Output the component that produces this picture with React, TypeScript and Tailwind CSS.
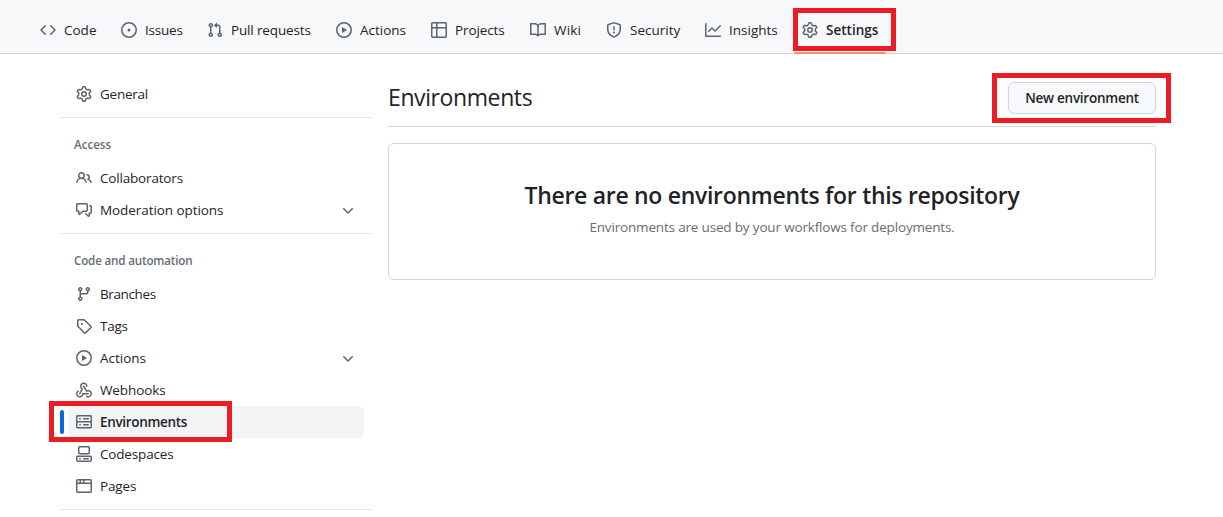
import type { ReactNode } from "react";

const PATHS = {
  code: "m11.28 3.22 4.25 4.25a.75.75 0 0 1 0 1.06l-4.25 4.25a.749.749 0 0 1-1.275-.326.749.749 0 0 1 .215-.734L13.94 8l-3.72-3.72a.749.749 0 0 1 .326-1.275.749.749 0 0 1 .734.215Zm-6.56 0a.751.751 0 0 1 1.042.018.751.751 0 0 1 .018 1.042L2.06 8l3.72 3.72a.749.749 0 0 1-.326 1.275.749.749 0 0 1-.734-.215L.47 8.53a.75.75 0 0 1 0-1.06Z",
  issue: "M8 9.5a1.5 1.5 0 1 0 0-3 1.5 1.5 0 0 0 0 3Z M8 0a8 8 0 1 1 0 16A8 8 0 0 1 8 0ZM1.5 8a6.5 6.5 0 1 0 13 0 6.5 6.5 0 0 0-13 0Z",
  pull: "M1.5 3.25a2.25 2.25 0 1 1 3 2.122v5.256a2.251 2.251 0 1 1-1.5 0V5.372A2.25 2.25 0 0 1 1.5 3.25Zm5.677-.177L9.573.677A.25.25 0 0 1 10 .854V2.5h1A2.5 2.5 0 0 1 13.5 5v5.628a2.251 2.251 0 1 1-1.5 0V5a1 1 0 0 0-1-1h-1v1.646a.25.25 0 0 1-.427.177L7.177 3.427a.25.25 0 0 1 0-.354ZM3.75 2.5a.75.75 0 1 0 0 1.5.75.75 0 0 0 0-1.5Zm0 9.5a.75.75 0 1 0 0 1.5.75.75 0 0 0 0-1.5Zm8.25.75a.75.75 0 1 0 1.5 0 .75.75 0 0 0-1.5 0Z",
  play: "M8 0a8 8 0 1 1 0 16A8 8 0 0 1 8 0ZM1.5 8a6.5 6.5 0 1 0 13 0 6.5 6.5 0 0 0-13 0Zm4.879-2.773 4.264 2.559a.25.25 0 0 1 0 .428l-4.264 2.559A.25.25 0 0 1 6 10.559V5.442a.25.25 0 0 1 .379-.215Z",
  table: "M0 1.75C0 .784.784 0 1.75 0h12.5C15.216 0 16 .784 16 1.75v12.5A1.75 1.75 0 0 1 14.25 16H1.75A1.75 1.75 0 0 1 0 14.25ZM6.5 6.5v8h7.75a.25.25 0 0 0 .25-.25V6.5Zm8-1.5V1.75a.25.25 0 0 0-.25-.25H6.5V5Zm-13 1.5v7.75c0 .138.112.25.25.25H5v-8ZM5 5V1.5H1.75a.25.25 0 0 0-.25.25V5Z",
  book: "M0 1.75A.75.75 0 0 1 .75 1h4.253c1.227 0 2.317.59 3 1.501A3.743 3.743 0 0 1 11.006 1h4.245a.75.75 0 0 1 .75.75v10.5a.75.75 0 0 1-.75.75h-4.507a2.25 2.25 0 0 0-1.591.659l-.622.621a.75.75 0 0 1-1.06 0l-.622-.621A2.25 2.25 0 0 0 5.258 13H.75a.75.75 0 0 1-.75-.75Zm7.251 10.324.004-5.073-.002-2.253A2.25 2.25 0 0 0 5.003 2.5H1.5v9h3.757a3.75 3.75 0 0 1 1.994.574ZM8.755 4.75l-.004 7.322a3.752 3.752 0 0 1 1.992-.572H14.5v-9h-3.495a2.25 2.25 0 0 0-2.25 2.25Z",
  shield: "M7.467.133a1.748 1.748 0 0 1 1.066 0l5.25 1.68A1.75 1.75 0 0 1 15 3.48V7c0 1.566-.32 3.182-1.303 4.682-.983 1.498-2.585 2.813-5.032 3.855a1.697 1.697 0 0 1-1.33 0c-2.447-1.042-4.049-2.357-5.032-3.855C1.32 10.182 1 8.566 1 7V3.48a1.75 1.75 0 0 1 1.217-1.667Zm.61 1.429a.25.25 0 0 0-.153 0l-5.25 1.68a.25.25 0 0 0-.174.238V7c0 1.358.275 2.666 1.057 3.86.784 1.194 2.121 2.34 4.366 3.297a.196.196 0 0 0 .154 0c2.245-.956 3.582-2.104 4.366-3.298C13.225 9.666 13.5 8.36 13.5 7V3.48a.251.251 0 0 0-.174-.237l-5.25-1.68ZM8.75 4.75v3a.75.75 0 0 1-1.5 0v-3a.75.75 0 0 1 1.5 0ZM9 10.5a1 1 0 1 1-2 0 1 1 0 0 1 2 0Z",
  graph: "M1.5 1.75V13.5h13.75a.75.75 0 0 1 0 1.5H.75a.75.75 0 0 1-.75-.75V1.75a.75.75 0 0 1 1.5 0Zm14.28 2.53-5.25 5.25a.75.75 0 0 1-1.06 0L7 7.06 4.28 9.78a.751.751 0 0 1-1.042-.018.751.751 0 0 1-.018-1.042l3.25-3.25a.75.75 0 0 1 1.06 0L10 7.94l4.72-4.72a.751.751 0 0 1 1.042.018.751.751 0 0 1 .018 1.042Z",
  gear: "M8 0a8.2 8.2 0 0 1 .701.031C9.444.095 9.99.645 10.16 1.29l.288 1.107c.018.066.079.158.212.224.231.114.454.243.668.386.123.082.233.09.299.071l1.103-.303c.644-.176 1.392.021 1.82.63.27.385.506.792.704 1.218.315.675.111 1.422-.364 1.891l-.814.806c-.049.048-.098.147-.088.294.016.257.016.515 0 .772-.01.147.038.246.088.294l.814.806c.475.469.679 1.216.364 1.891a7.977 7.977 0 0 1-.704 1.217c-.428.61-1.176.807-1.82.63l-1.102-.302c-.067-.019-.177-.011-.3.071a5.909 5.909 0 0 1-.668.386c-.133.066-.194.158-.211.224l-.29 1.106c-.168.646-.715 1.196-1.458 1.26a8.006 8.006 0 0 1-1.402 0c-.743-.064-1.289-.614-1.458-1.26l-.289-1.106c-.018-.066-.079-.158-.212-.224a5.738 5.738 0 0 1-.668-.386c-.123-.082-.233-.09-.299-.071l-1.103.303c-.644.176-1.392-.021-1.82-.63a8.12 8.12 0 0 1-.704-1.218c-.315-.675-.111-1.422.363-1.891l.815-.806c.05-.048.098-.147.088-.294a6.214 6.214 0 0 1 0-.772c.01-.147-.038-.246-.088-.294l-.815-.806C.635 6.045.431 5.298.746 4.623a7.92 7.92 0 0 1 .704-1.217c.428-.61 1.176-.807 1.82-.63l1.102.302c.067.019.177.011.3-.071.214-.143.437-.272.668-.386.133-.066.194-.158.211-.224l.29-1.106C6.009.645 6.556.095 7.299.03 7.53.01 7.764 0 8 0Zm-.571 1.525c-.036.003-.108.036-.137.146l-.289 1.105c-.147.561-.549.967-.998 1.189-.173.086-.34.183-.5.29-.417.278-.97.423-1.529.27l-1.103-.303c-.109-.03-.175.016-.195.045-.22.312-.412.644-.573.99-.014.031-.021.11.059.19l.815.806c.411.406.562.957.53 1.456a4.709 4.709 0 0 0 0 .582c.032.499-.119 1.05-.53 1.456l-.815.806c-.081.08-.073.159-.059.19.162.346.353.677.573.989.02.03.085.076.195.046l1.102-.303c.56-.153 1.113-.008 1.53.27.161.107.328.204.501.29.447.222.85.629.997 1.189l.289 1.105c.029.109.101.143.137.146a6.6 6.6 0 0 0 1.142 0c.036-.003.108-.036.137-.146l.289-1.105c.147-.561.549-.967.998-1.189.173-.086.34-.183.5-.29.417-.278.97-.423 1.529-.27l1.103.303c.109.029.175-.016.195-.045.22-.313.411-.644.573-.99.014-.031.021-.11-.059-.19l-.815-.806c-.411-.406-.562-.957-.53-1.456a4.709 4.709 0 0 0 0-.582c-.032-.499.119-1.05.53-1.456l.815-.806c.081-.08.073-.159.059-.19a6.464 6.464 0 0 0-.573-.989c-.02-.03-.085-.076-.195-.046l-1.102.303c-.56.153-1.113.008-1.53-.27a4.44 4.44 0 0 0-.501-.29c-.447-.222-.85-.629-.997-1.189l-.289-1.105c-.029-.11-.101-.143-.137-.146a6.6 6.6 0 0 0-1.142 0ZM11 8a3 3 0 1 1-6 0 3 3 0 0 1 6 0ZM9.5 8a1.5 1.5 0 1 0-3.001.001A1.5 1.5 0 0 0 9.5 8Z",
  people: "M2 5.5a3.5 3.5 0 1 1 5.898 2.549 5.508 5.508 0 0 1 3.034 4.084.75.75 0 1 1-1.482.235 4 4 0 0 0-7.9 0 .75.75 0 0 1-1.482-.236A5.507 5.507 0 0 1 3.102 8.05 3.493 3.493 0 0 1 2 5.5ZM11 4a3.001 3.001 0 0 1 2.22 5.018 5.01 5.01 0 0 1 2.56 3.012.749.749 0 0 1-.885.954.752.752 0 0 1-.549-.514 3.507 3.507 0 0 0-2.522-2.372.75.75 0 0 1-.574-.73v-.352a.75.75 0 0 1 .416-.672A1.5 1.5 0 0 0 11 5.5.75.75 0 0 1 11 4Zm-5.5-.5a2 2 0 1 0-.001 3.999A2 2 0 0 0 5.5 3.5Z",
  discussion: "M1.75 1h8.5c.966 0 1.75.784 1.75 1.75v5.5A1.75 1.75 0 0 1 10.25 10H7.061l-2.574 2.573A1.458 1.458 0 0 1 2 11.543V10h-.25A1.75 1.75 0 0 1 0 8.25v-5.5C0 1.784.784 1 1.75 1ZM1.5 2.75v5.5c0 .138.112.25.25.25h1a.75.75 0 0 1 .75.75v2.19l2.72-2.72a.749.749 0 0 1 .53-.22h3.5a.25.25 0 0 0 .25-.25v-5.5a.25.25 0 0 0-.25-.25h-8.5a.25.25 0 0 0-.25.25Zm13 2a.25.25 0 0 0-.25-.25h-.5a.75.75 0 0 1 0-1.5h.5c.966 0 1.75.784 1.75 1.75v5.5A1.75 1.75 0 0 1 14.25 12H14v1.543a1.458 1.458 0 0 1-2.487 1.03L9.22 12.28a.749.749 0 0 1 .326-1.275.749.749 0 0 1 .734.215l2.22 2.22v-2.19a.75.75 0 0 1 .75-.75h1a.25.25 0 0 0 .25-.25Z",
  branch: "M9.5 3.25a2.25 2.25 0 1 1 3 2.122V6A2.5 2.5 0 0 1 10 8.5H6a1 1 0 0 0-1 1v1.128a2.251 2.251 0 1 1-1.5 0V5.372a2.25 2.25 0 1 1 1.5 0v1.836A2.493 2.493 0 0 1 6 7h4a1 1 0 0 0 1-1v-.628A2.25 2.25 0 0 1 9.5 3.25Zm-6 0a.75.75 0 1 0 1.5 0 .75.75 0 0 0-1.5 0Zm8.25-.75a.75.75 0 1 0 0 1.5.75.75 0 0 0 0-1.5ZM4.25 12a.75.75 0 1 0 0 1.5.75.75 0 0 0 0-1.5Z",
  tag: "M1 7.775V2.75C1 1.784 1.784 1 2.75 1h5.025c.464 0 .91.184 1.238.513l6.25 6.25a1.75 1.75 0 0 1 0 2.474l-5.026 5.026a1.75 1.75 0 0 1-2.474 0l-6.25-6.25A1.752 1.752 0 0 1 1 7.775Zm1.5 0c0 .066.026.13.073.177l6.25 6.25a.25.25 0 0 0 .354 0l5.025-5.025a.25.25 0 0 0 0-.354l-6.25-6.25a.25.25 0 0 0-.177-.073H2.75a.25.25 0 0 0-.25.25ZM6 5a1 1 0 1 1 0 2 1 1 0 0 1 0-2Z",
  webhook: "M5.5 4.25a2.25 2.25 0 0 1 4.5 0 .75.75 0 0 0 1.5 0 3.75 3.75 0 1 0-6.14 2.889l-2.272 4.258a.75.75 0 0 0 1.324.706L7 7.25a.75.75 0 0 0-.309-1.015A2.25 2.25 0 0 1 5.5 4.25Z M7.364 3.607a.75.75 0 0 1 1.03.257l2.608 4.349a3.75 3.75 0 1 1-.628 6.785.75.75 0 0 1 .752-1.299 2.25 2.25 0 1 0-.033-3.88.75.75 0 0 1-1.03-.256L7.107 4.636a.75.75 0 0 1 .257-1.03Z M2.9 8.776A.75.75 0 0 1 2.625 9.8 2.25 2.25 0 1 0 6 11.75a.75.75 0 0 1 .75-.751h5.5a.75.75 0 0 1 0 1.5H7.425a3.751 3.751 0 1 1-5.55-3.998.75.75 0 0 1 1.024.274Z",
  server: "M1.75 1h12.5c.966 0 1.75.784 1.75 1.75v4c0 .372-.116.717-.314 1 .198.283.314.628.314 1v4a1.75 1.75 0 0 1-1.75 1.75H1.75A1.75 1.75 0 0 1 0 12.75v-4c0-.358.109-.707.314-1a1.739 1.739 0 0 1-.314-1v-4C0 1.784.784 1 1.75 1ZM1.5 2.75v4c0 .138.112.25.25.25h12.5a.25.25 0 0 0 .25-.25v-4a.25.25 0 0 0-.25-.25H1.75a.25.25 0 0 0-.25.25Zm.25 5.75a.25.25 0 0 0-.25.25v4c0 .138.112.25.25.25h12.5a.25.25 0 0 0 .25-.25v-4a.25.25 0 0 0-.25-.25ZM7 4.75A.75.75 0 0 1 7.75 4h4.5a.75.75 0 0 1 0 1.5h-4.5A.75.75 0 0 1 7 4.75ZM7.75 10h4.5a.75.75 0 0 1 0 1.5h-4.5a.75.75 0 0 1 0-1.5ZM3 4.75A.75.75 0 0 1 3.75 4h.5a.75.75 0 0 1 0 1.5h-.5A.75.75 0 0 1 3 4.75ZM3.75 10h.5a.75.75 0 0 1 0 1.5h-.5a.75.75 0 0 1 0-1.5Z",
  codespaces: "M0 11.25c0-.966.784-1.75 1.75-1.75h12.5c.966 0 1.75.784 1.75 1.75v3A1.75 1.75 0 0 1 14.25 16H1.75A1.75 1.75 0 0 1 0 14.25Zm2-9.5C2 .784 2.784 0 3.75 0h8.5C13.216 0 14 .784 14 1.75v5a1.75 1.75 0 0 1-1.75 1.75h-8.5A1.75 1.75 0 0 1 2 6.75Zm1.75-.25a.25.25 0 0 0-.25.25v5c0 .138.112.25.25.25h8.5a.25.25 0 0 0 .25-.25v-5a.25.25 0 0 0-.25-.25Zm-2 9.5a.25.25 0 0 0-.25.25v3c0 .138.112.25.25.25h12.5a.25.25 0 0 0 .25-.25v-3a.25.25 0 0 0-.25-.25Z M7 12.75a.75.75 0 0 1 .75-.75h4.5a.75.75 0 0 1 0 1.5h-4.5a.75.75 0 0 1-.75-.75Zm-4 0a.75.75 0 0 1 .75-.75h.5a.75.75 0 0 1 0 1.5h-.5a.75.75 0 0 1-.75-.75Z",
  browser: "M0 2.75C0 1.784.784 1 1.75 1h12.5c.966 0 1.75.784 1.75 1.75v10.5A1.75 1.75 0 0 1 14.25 15H1.75A1.75 1.75 0 0 1 0 13.25ZM14.5 6h-13v7.25c0 .138.112.25.25.25h12.5a.25.25 0 0 0 .25-.25Zm-6-3.5v2h6V2.75a.25.25 0 0 0-.25-.25ZM5 2.5v2h2v-2Zm-3.25 0a.25.25 0 0 0-.25.25V4.5h2v-2Z",
  chevron: "M12.78 5.22a.749.749 0 0 1 0 1.06l-4.25 4.25a.749.749 0 0 1-1.06 0L3.22 6.28a.749.749 0 1 1 1.06-1.06L8 8.939l3.72-3.719a.749.749 0 0 1 1.06 0Z",
};

type IconName = keyof typeof PATHS;

function Icon({ name, className = "" }: { name: IconName; className?: string }) {
  return (
    <svg viewBox="0 0 16 16" className={"size-4 shrink-0 fill-[#5c646d] " + className} aria-hidden="true">
      <path d={PATHS[name]} fillRule={name === "webhook" ? "nonzero" : "evenodd"} />
    </svg>
  );
}

const TABS: { icon: IconName; label: string; width: string }[] = [
  { icon: "code", label: "Code", width: "w-[33px]" },
  { icon: "issue", label: "Issues", width: "w-[38px] tracking-[-0.2px]" },
  { icon: "pull", label: "Pull requests", width: "w-[81px] tracking-[-0.15px]" },
  { icon: "play", label: "Actions", width: "w-[47px]" },
  { icon: "table", label: "Projects", width: "w-[51px] tracking-[-0.1px]" },
  { icon: "book", label: "Wiki", width: "w-[28px] tracking-[0.2px]" },
  { icon: "shield", label: "Security", width: "w-[51px]" },
  { icon: "graph", label: "Insights", width: "w-[49px]" },
];

function Item({ icon, label, tracking = "", chevron = false }: { icon: IconName; label: string; tracking?: string; chevron?: boolean }) {
  return (
    <a className="mx-2 flex h-8 items-center gap-2 px-2">
      <Icon name={icon} />
      <span className={"grow whitespace-nowrap " + tracking}>{label}</span>
      {chevron && <Icon name="chevron" className="mt-0.5" />}
    </a>
  );
}

function Heading({ children }: { children: ReactNode }) {
  return <h3 className="px-3.5 pt-[18px] pb-2 text-[11.6px] leading-[18px] font-semibold text-[#656d76]">{children}</h3>;
}

function Marker({ box }: { box: string }) {
  return <div className={"pointer-events-none absolute border-[5px] border-[#ed1c24] " + box} />;
}

export default function App() {
  return (
    <div className="h-[517px] overflow-hidden bg-white font-['Open_Sans',sans-serif] text-[13.5px] leading-5 text-[#1f2328]">
      <nav className="flex h-[54px] gap-2 border-b border-[#d0d7de] bg-[#f6f8fa] pt-2 pl-8">
        {TABS.map((t) => (
          <a key={t.label} className="flex h-11 items-center gap-2 px-2">
            <Icon name={t.icon} />
            <span className={"whitespace-nowrap " + t.width}>{t.label}</span>
          </a>
        ))}
        <a className="relative flex h-11 w-[92px] items-center gap-2 px-2 font-semibold">
          <Icon name="gear" />
          <span>Settings</span>
          <span className="absolute -bottom-0.5 left-0 h-0.5 w-full rounded-full bg-[#fd8c73]" />
          <Marker box="-left-px top-0 h-[43px] w-[103px]" />
        </a>
      </nav>

      <div className="flex">
        <aside className="mr-4 ml-[60px] w-[312px] shrink-0 pt-6">
          <Item icon="gear" label="General" tracking="tracking-[-0.25px]" />
          <hr className="mt-[7px] border-[#e5e8eb]" />
          <Heading>Access</Heading>
          <Item icon="people" label="Collaborators" tracking="tracking-[-0.18px]" />
          <Item icon="discussion" label="Moderation options" tracking="tracking-[-0.07px]" chevron />
          <hr className="mt-[7px] border-[#e5e8eb]" />
          <Heading><span className="tracking-[-0.16px]">Code and automation</span></Heading>
          <Item icon="branch" label="Branches" tracking="tracking-[-0.38px]" />
          <Item icon="tag" label="Tags" tracking="tracking-[-0.25px]" />
          <Item icon="play" label="Actions" chevron />
          <Item icon="webhook" label="Webhooks" tracking="tracking-[-0.1px]" />
          <div className="relative">
            <div className="mx-2 rounded-md bg-[#f3f4f6]">
              <a className="flex h-8 items-center gap-2 px-2 font-semibold">
                <Icon name="server" />
                <span className="tracking-[-0.33px]">Environments</span>
              </a>
            </div>
            <span className="absolute top-1 left-0 h-6 w-1 rounded-md bg-[#0969da]" />
            <Marker box="-left-[11px] -top-[5px] h-[41px] w-[183px]" />
          </div>
          <Item icon="codespaces" label="Codespaces" tracking="tracking-[-0.17px]" />
          <Item icon="browser" label="Pages" tracking="tracking-[-0.15px]" />
          <hr className="mt-[7px] border-[#e5e8eb]" />
        </aside>

        <main className="w-[768px]">
          <header className="flex h-[73px] items-start justify-between border-b border-[#d0d7de] pt-7">
            <h2 className="-mt-px text-[23px] leading-8 tracking-[-0.4px]">Environments</h2>
            <div className="relative">
              <button className="h-8 w-[148px] rounded-md border border-[#d0d7de] bg-[#f6f8fa] font-semibold tracking-[-0.25px] whitespace-nowrap">
                New environment
              </button>
              <Marker box="-left-4 -top-[9px] h-[50px] w-[179px]" />
            </div>
          </header>
          <section className="mt-4 h-[137px] rounded-md border border-[#d0d7de] pt-[33px] text-center">
            <h3 className="text-[23px] leading-9 font-semibold tracking-[-0.3px]">There are no environments for this repository</h3>
            <p className="mt-1 tracking-[-0.17px] text-[#656d76]">Environments are used by your workflows for deployments.</p>
          </section>
        </main>
      </div>
    </div>
  );
}
